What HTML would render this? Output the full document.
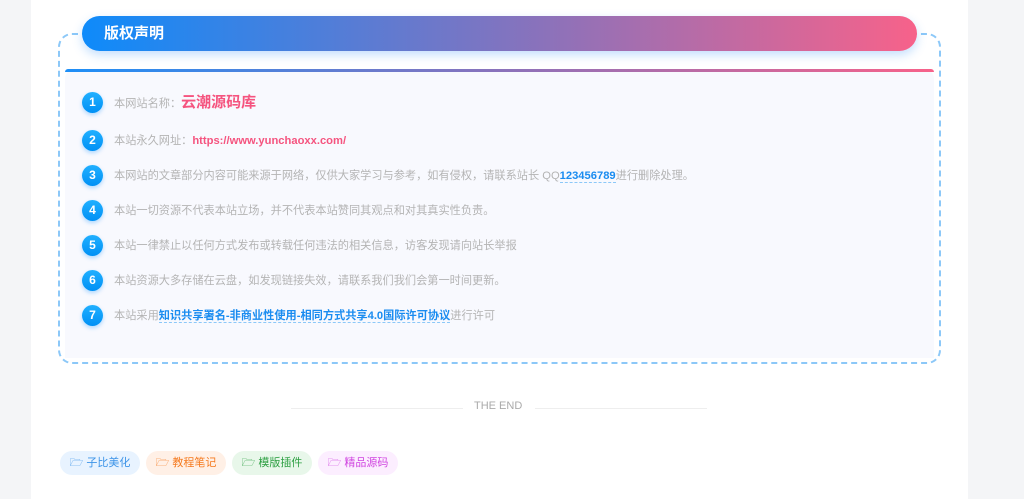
<!DOCTYPE html>
<html><head><meta charset="utf-8"><style>
*{margin:0;padding:0;box-sizing:border-box}
body{width:1024px;height:499px;background:#f4f5f7;font-family:"Liberation Sans","Noto Sans CJK SC",sans-serif;position:relative;overflow:hidden}
.card{position:absolute;left:31px;top:0;width:937px;height:499px;background:#fff}
.dash{position:absolute;left:58px;top:33px;width:883px;height:331px;border:2px dashed #8cc8f8;border-radius:14px}
.panel{position:absolute;left:65px;top:69px;width:869px;height:289px;background:#f8f9fe;border-radius:10px 10px 0 0}
.topline{position:absolute;left:65px;top:69px;width:869px;height:3px;border-radius:3px 3px 0 0;background:linear-gradient(90deg,#1e8ff7,#8a72bb,#f7628a)}
.pill{position:absolute;left:82px;top:16px;width:835px;height:35px;border-radius:18px;background:linear-gradient(90deg,#0e8bfa,#8a72bb 55%,#f7628a);box-shadow:0 4px 10px rgba(60,150,250,.3);color:#fff;font-weight:bold;font-size:15px;line-height:35px;padding-left:22px}
.it{position:absolute;left:82px;height:22px;font-size:11.2px;color:#b4b4b4;line-height:22px}
.n{position:absolute;left:0;top:0;width:21px;height:21px;border-radius:50%;background:linear-gradient(180deg,#21b0ff,#0090f5);color:#fff;font-weight:bold;font-size:12px;text-align:center;line-height:21px;box-shadow:0 2px 4px rgba(0,140,255,.3)}
.t{position:absolute;left:32px;top:0;white-space:nowrap}
.pk{color:#f5547f;font-weight:bold}
.bl{color:#1a8cf0;font-weight:bold;border-bottom:1px dashed #8cc8f8}
.end{position:absolute;top:400px;left:474px;font-size:11px;color:#aaa}
.ln{position:absolute;top:408px;height:1px;background:#eee;width:172px}
.tag{position:absolute;top:451px;height:24px;width:80px;border-radius:12px;font-size:11px;line-height:24px;text-align:center}
</style></head><body>
<div class="card"></div>
<div class="dash"></div>
<div class="panel"></div>
<div class="topline"></div>
<div class="pill">版权声明</div>
<div class="it" style="top:92px"><div class="n">1</div><div class="t">本网站名称：<span class="pk" style="font-size:15px">云潮源码库</span></div></div>
<div class="it" style="top:130px"><div class="n">2</div><div class="t">本站永久网址：<span class="pk">https://www.yunchaoxx.com/</span></div></div>
<div class="it" style="top:165px"><div class="n">3</div><div class="t">本网站的文章部分内容可能来源于网络，仅供大家学习与参考，如有侵权，请联系站长 QQ<span class="bl">123456789</span>进行删除处理。</div></div>
<div class="it" style="top:200px"><div class="n">4</div><div class="t">本站一切资源不代表本站立场，并不代表本站赞同其观点和对其真实性负责。</div></div>
<div class="it" style="top:235px"><div class="n">5</div><div class="t">本站一律禁止以任何方式发布或转载任何违法的相关信息，访客发现请向站长举报</div></div>
<div class="it" style="top:270px"><div class="n">6</div><div class="t">本站资源大多存储在云盘，如发现链接失效，请联系我们我们会第一时间更新。</div></div>
<div class="it" style="top:305px"><div class="n">7</div><div class="t">本站采用<span class="bl">知识共享署名-非商业性使用-相同方式共享4.0国际许可协议</span>进行许可</div></div>
<div class="ln" style="left:291px"></div><div class="end">THE END</div><div class="ln" style="left:535px"></div>
<div class="tag" style="left:60px;background:#e8f3ff;color:#3d94e8">🗁 子比美化</div>
<div class="tag" style="left:146px;background:#fff0e6;color:#f57a1f">🗁 教程笔记</div>
<div class="tag" style="left:232px;background:#e8f7ea;color:#2ea043">🗁 模版插件</div>
<div class="tag" style="left:318px;background:#fceeff;color:#d045e0">🗁 精品源码</div>
</body></html>
